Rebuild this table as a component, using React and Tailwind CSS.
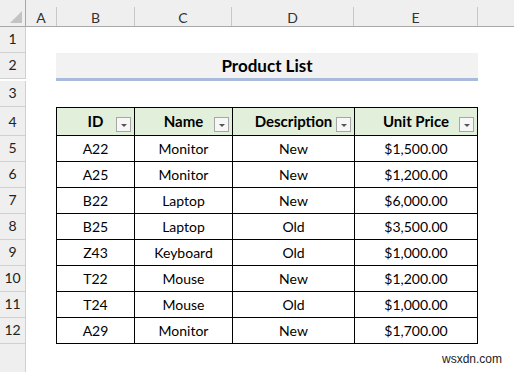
const rows = [
  ['A22', 'Monitor', 'New', '$1,500.00'],
  ['A25', 'Monitor', 'New', '$1,200.00'],
  ['B22', 'Laptop', 'New', '$6,000.00'],
  ['B25', 'Laptop', 'Old', '$3,500.00'],
  ['Z43', 'Keyboard', 'Old', '$1,000.00'],
  ['T22', 'Mouse', 'New', '$1,200.00'],
  ['T24', 'Mouse', 'Old', '$1,000.00'],
  ['A29', 'Monitor', 'New', '$1,700.00'],
];

const widths = ['w-[79px]', 'w-[98px]', 'w-[122px]', 'w-[123px]'];

function RowHead({ n, h = 'h-[26px]' }) {
  return (
    <div className={`w-[26px] ${h} shrink-0 bg-[#efefef] border-r border-b border-[#d0d0d0] flex items-end justify-center pb-[3px] text-[14px] text-[#222]`}>
      {n}
    </div>
  );
}

function FilterBtn() {
  return (
    <div className="absolute right-[3px] bottom-[3px] w-[15px] h-[15px] bg-[#f7f7f7] border border-[#a6a6a6] flex items-center justify-center">
      <div className="w-0 h-0 border-l-[3px] border-r-[3px] border-t-[3px] border-l-transparent border-r-transparent border-t-[#555] mt-[1px]" />
    </div>
  );
}

export default function App() {
  return (
    <div className="relative w-[514px] h-[372px] overflow-hidden bg-white text-black" style={{ fontFamily: 'Lato, "Open Sans", sans-serif' }}>
      {/* column headers */}
      <div className="flex h-[27px] bg-[#efefef] border-b border-[#a8a8a8] text-[14px] text-[#333]">
        <div className="w-[26px] shrink-0 border-r border-[#a8a8a8] flex items-end justify-end p-[3px]">
          <div className="w-0 h-0 border-l-[12px] border-b-[12px] border-l-transparent border-b-[#c3c3c3]" />
        </div>
        {[
          ['A', 'w-[31px]'],
          ['B', 'w-[78px]'],
          ['C', 'w-[97px]'],
          ['D', 'w-[122px]'],
          ['E', 'w-[124px]'],
        ].map(([l, w]) => (
          <div key={l} className={`${w} shrink-0 flex items-end`}>
            <div className="flex-1 h-[19px] border-r border-[#c8c8c8] flex items-center justify-center pt-[1px]">{l}</div>
          </div>
        ))}
        <div className="flex-1" />
      </div>

      {/* rows 1-3 */}
      <div className="flex">
        <RowHead n={1} />
      </div>
      <div className="flex items-start">
        <RowHead n={2} />
        <div className="ml-[30px] w-[422px] h-[28px] bg-[#f2f2f2] border-b-[3px] border-[#a9bbda] flex items-center justify-center font-bold text-[17px] relative z-10">
          Product List
        </div>
      </div>
      <div className="flex">
        <RowHead n={3} />
      </div>

      {/* table header */}
      <div className="flex">
        <RowHead n={4} h="h-[29px]" />
        <div className="ml-[30px] flex border-t border-black">
          {['ID', 'Name', 'Description', 'Unit Price'].map((t, i) => (
            <div key={t} className={`${widths[i]} h-[28px] relative bg-[#e2efda] border-r border-b border-black ${i === 0 ? 'border-l' : ''} flex items-center justify-center font-bold text-[15px]`}>
              {t}
              <FilterBtn />
            </div>
          ))}
        </div>
      </div>

      {/* data rows */}
      {rows.map((r, ri) => (
        <div key={ri} className="flex">
          <RowHead n={ri + 5} />
          <div className="ml-[30px] flex">
            {r.map((c, i) => (
              <div key={i} className={`${widths[i]} h-[26px] border-r border-b border-black ${i === 0 ? 'border-l' : ''} flex items-center justify-center text-[14px]`}>
                {c}
              </div>
            ))}
          </div>
        </div>
      ))}
      <div className="flex">
        <RowHead n="" h="h-[40px]" />
      </div>

      <div className="absolute right-[12px] bottom-[4px] text-[12px] text-[#222]" style={{ fontFamily: '"Liberation Sans", Arial, sans-serif' }}>
        wsxdn.com
      </div>
    </div>
  );
}
